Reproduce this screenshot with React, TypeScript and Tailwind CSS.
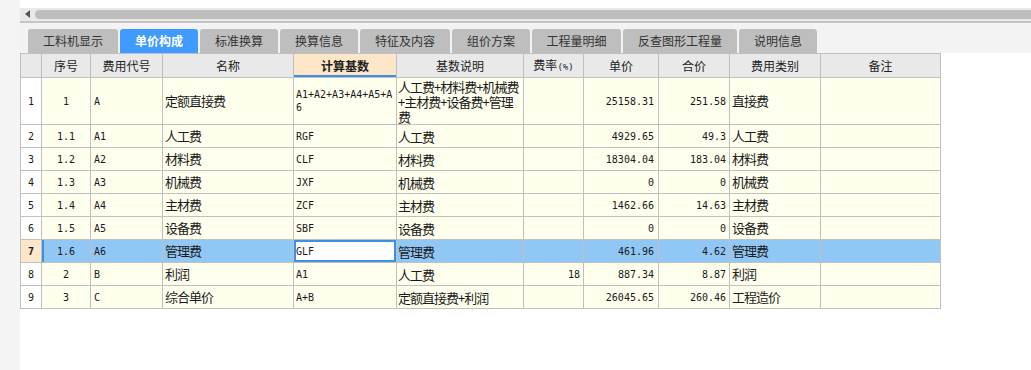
import React from "react";

const cjk = "font-['Noto_Sans_CJK_SC',sans-serif]";
const mono = "font-['DejaVu_Sans_Mono','Noto_Sans_CJK_SC',monospace]";

const tabs = [
  { label: "工料机显示", w: "w-[90px]" },
  { label: "单价构成", w: "w-[78px]", active: true },
  { label: "标准换算", w: "w-[78px]" },
  { label: "换算信息", w: "w-[78px]" },
  { label: "特征及内容", w: "w-[90px]" },
  { label: "组价方案", w: "w-[78px]" },
  { label: "工程量明细", w: "w-[89px]" },
  { label: "反查图形工程量", w: "w-[114px]" },
  { label: "说明信息", w: "w-[78px]" },
];

type Row = {
  no: string;
  code: string;
  name: string;
  base: string;
  desc: string[];
  rate: string;
  price: string;
  total: string;
  kind: string;
};

const rows: Row[] = [
  { no: "1", code: "A", name: "定额直接费", base: "A1+A2+A3+A4+A5+A6", desc: ["人工费+材料费+机械费", "+主材费+设备费+管理", "费"], rate: "", price: "25158.31", total: "251.58", kind: "直接费" },
  { no: "1.1", code: "A1", name: "人工费", base: "RGF", desc: ["人工费"], rate: "", price: "4929.65", total: "49.3", kind: "人工费" },
  { no: "1.2", code: "A2", name: "材料费", base: "CLF", desc: ["材料费"], rate: "", price: "18304.04", total: "183.04", kind: "材料费" },
  { no: "1.3", code: "A3", name: "机械费", base: "JXF", desc: ["机械费"], rate: "", price: "0", total: "0", kind: "机械费" },
  { no: "1.4", code: "A4", name: "主材费", base: "ZCF", desc: ["主材费"], rate: "", price: "1462.66", total: "14.63", kind: "主材费" },
  { no: "1.5", code: "A5", name: "设备费", base: "SBF", desc: ["设备费"], rate: "", price: "0", total: "0", kind: "设备费" },
  { no: "1.6", code: "A6", name: "管理费", base: "GLF", desc: ["管理费"], rate: "", price: "461.96", total: "4.62", kind: "管理费" },
  { no: "2", code: "B", name: "利润", base: "A1", desc: ["人工费"], rate: "18", price: "887.34", total: "8.87", kind: "利润" },
  { no: "3", code: "C", name: "综合单价", base: "A+B", desc: ["定额直接费+利润"], rate: "", price: "26045.65", total: "260.46", kind: "工程造价" },
];

const cell = "border-r border-b border-[#c0c0c0] align-middle p-0";
const txt = "text-[13px] tracking-[-1px]";

export default function App() {
  const selected = 6;
  return (
    <div className="flex w-[1031px] h-[370px] overflow-hidden bg-white text-[#1a1a1a]">
      <div className="w-[20px] shrink-0 bg-[#f4f4f4]" />
      <div className="flex-1 flex flex-col">
        <div className="h-[8px] bg-white" />
        <div className="h-[12px] bg-[#e9e9e9] flex items-center">
          <div className="w-[15px] flex justify-center">
            <div className="w-0 h-0 border-y-[4px] border-y-transparent border-r-[5px] border-r-[#555]" />
          </div>
          <div className="flex-1 h-[9px] rounded-l-[5px] bg-[#bdbdbd]" />
        </div>
        <div className="h-[1px] bg-[#ececec]" />
        <div className="h-[2px] bg-[#c4c4c4]" />
        <div className={`bg-[#f3f3f3] pt-[6px] pl-[8px] flex gap-[2px] ${cjk}`}>
          {tabs.map((t) => (
            <div
              key={t.label}
              className={`${t.w} h-[24px] rounded-t-[3px] flex items-center justify-center text-[12px] ${
                t.active ? "bg-[#3f9bfd] text-white font-bold" : "bg-[#bebebe] text-[#333]"
              }`}
            >
              {t.label}
            </div>
          ))}
        </div>
        <table className={`table-fixed border-separate border-spacing-0 border-l border-t border-[#c0c0c0] w-[921px] ${cjk}`}>
          <thead>
            <tr className="h-[24px] text-[12px] text-[#222] bg-[#e9e9e9]">
              <th className={`${cell} w-[21px] font-normal`} />
              <th className={`${cell} w-[49px] font-normal`}>序号</th>
              <th className={`${cell} w-[72px] font-normal`}>费用代号</th>
              <th className={`${cell} w-[131px] font-normal`}>名称</th>
              <th className={`${cell} w-[103px] font-bold bg-[#fee6c9] shadow-[inset_0_-2px_0_#3d8fe8]`}>计算基数</th>
              <th className={`${cell} w-[127px] font-normal`}>基数说明</th>
              <th className={`${cell} w-[60px] font-normal`}>
                费率<span className={`${mono} text-[9px]`}>(%)</span>
              </th>
              <th className={`${cell} w-[75px] font-normal`}>单价</th>
              <th className={`${cell} w-[71px] font-normal`}>合价</th>
              <th className={`${cell} w-[91px] font-normal`}>费用类别</th>
              <th className={`${cell} w-[120px] font-normal`}>备注</th>
            </tr>
          </thead>
          <tbody>
            {rows.map((r, i) => {
              const sel = i === selected;
              const bg = sel ? "bg-[#91c7f5]" : "bg-[#ffffee]";
              return (
                <tr key={i} className={i === 0 ? "h-[47px]" : "h-[23px]"}>
                  <td className={`${cell} ${mono} text-[10px] text-center ${sel ? "bg-[#fee6cb] font-bold" : "bg-white"}`}>{i + 1}</td>
                  <td className={`${cell} ${mono} text-[10px] text-center ${bg} ${sel ? "shadow-[inset_2px_0_0_#3d8fe8]" : ""}`}>{r.no}</td>
                  <td className={`${cell} ${mono} text-[10px] pl-[3px] ${bg}`}>{r.code}</td>
                  <td className={`${cell} ${txt} pl-[2px] ${bg}`}>{r.name}</td>
                  <td
                    className={`${cell} ${mono} text-[10px] leading-[13px] px-[2px] break-all ${
                      sel ? "bg-white shadow-[inset_0_0_0_2px_#3d8fe8]" : bg
                    }`}
                  >
                    {r.base}
                  </td>
                  <td className={`${cell} ${txt} leading-[15px] pl-[1px] whitespace-nowrap ${bg}`}>
                    {r.desc.map((l, k) => (
                      <div key={k}>{l}</div>
                    ))}
                  </td>
                  <td className={`${cell} ${mono} text-[10px] text-right pr-[3px] ${bg}`}>{r.rate}</td>
                  <td className={`${cell} ${mono} text-[10px] text-right pr-[4px] ${bg}`}>{r.price}</td>
                  <td className={`${cell} ${mono} text-[10px] text-right pr-[3px] ${bg}`}>{r.total}</td>
                  <td className={`${cell} ${txt} pl-[2px] ${bg}`}>{r.kind}</td>
                  <td className={`${cell} ${bg}`} />
                </tr>
              );
            })}
          </tbody>
        </table>
      </div>
    </div>
  );
}
